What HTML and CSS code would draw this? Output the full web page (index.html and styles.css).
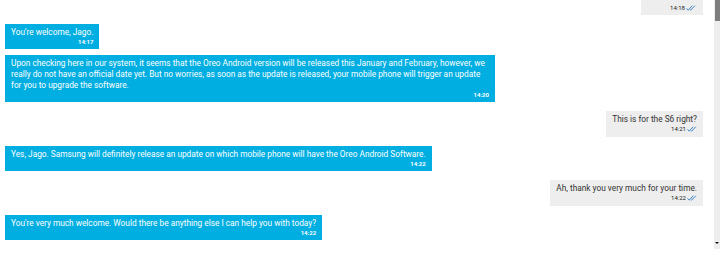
FILE: index.html
```html
<!DOCTYPE html>
<html lang="en">
<head>
<meta charset="utf-8">
<title>Chat</title>
<link rel="stylesheet" href="styles.css">
</head>
<body>
<div class="screen">
  <div class="chat">
    <div class="bubble user top">
      <div class="time">14:18 <svg class="tick" viewBox="0 0 10 6" width="10" height="6"><path d="M0.6 3.4 L2.2 5.2 L6.2 0.7 M3.9 4.6 L4.6 5.2 L8.9 0.7"/></svg></div>
    </div>
    <div class="bubble agent">
      <div class="text">You're welcome, Jago.</div>
      <div class="time">14:17</div>
    </div>
    <div class="bubble agent cont wide">
      <div class="text">Upon checking here in our system, it seems that the Oreo Android version will be released this January and February, however, we<br>really do not have an official date yet. But no worries, as soon as the update is released, your mobile phone will trigger an update<br>for you to upgrade the software.</div>
      <div class="time">14:20</div>
    </div>
    <div class="bubble user">
      <div class="text">This is for the S6 right?</div>
      <div class="time">14:21 <svg class="tick" viewBox="0 0 10 6" width="10" height="6"><path d="M0.6 3.4 L2.2 5.2 L6.2 0.7 M3.9 4.6 L4.6 5.2 L8.9 0.7"/></svg></div>
    </div>
    <div class="bubble agent">
      <div class="text">Yes, Jago. Samsung will definitely release an update on which mobile phone will have the Oreo Android Software.</div>
      <div class="time">14:22</div>
    </div>
    <div class="bubble user">
      <div class="text">Ah, thank you very much for your time.</div>
      <div class="time">14:22 <svg class="tick" viewBox="0 0 10 6" width="10" height="6"><path d="M0.6 3.4 L2.2 5.2 L6.2 0.7 M3.9 4.6 L4.6 5.2 L8.9 0.7"/></svg></div>
    </div>
    <div class="bubble agent">
      <div class="text">You're very much welcome. Would there be anything else I can help you with today?</div>
      <div class="time">14:22</div>
    </div>
  </div>
  <div class="scrollbar">
    <div class="thumb"></div>
    <div class="arrow"></div>
  </div>
</div>
</body>
</html>
```

FILE: styles.css
```css
html, body {
  margin: 0;
  padding: 0;
  background: #ffffff;
}

body {
  width: 720px;
  height: 270px;
  overflow: hidden;
  font-family: Roboto, "Liberation Sans", Arial, sans-serif;
}

.screen {
  display: flex;
  width: 720px;
  height: 270px;
}

.chat {
  flex: 1;
  display: flex;
  flex-direction: column;
  gap: 9px;
  padding: 0 11px 0 5px;
}

.bubble {
  max-width: 490px;
  padding: 3px 6px 4px;
  font-size: 8.3px;
  line-height: 11px;
}

.text {
  white-space: normal;
}

.agent {
  align-self: flex-start;
  background: #00aee2;
  color: #ffffff;
}

.wide {
  width: 478px;
}

.user {
  align-self: flex-end;
  background: #eeeeee;
  color: #333333;
  padding-bottom: 5px;
}

.cont {
  margin-top: -3px;
}

.top {
  padding: 4px 7px 4px 29px;
}

.time {
  font-size: 6px;
  font-weight: 700;
  line-height: 7px;
  text-align: right;
}

.user .time {
  display: flex;
  justify-content: flex-end;
  align-items: center;
  gap: 1px;
  font-weight: 400;
  color: #1a1a1a;
}

.tick {
  display: block;
  fill: none;
  stroke: #3f86c4;
  stroke-width: 1;
}

.scrollbar {
  width: 6px;
  height: 249px;
  background: #eeeeee;
  display: flex;
  flex-direction: column;
  justify-content: space-between;
  align-items: flex-end;
}

.thumb {
  width: 5px;
  height: 21px;
  background: #7d7d7d;
}

.arrow {
  width: 0;
  height: 0;
  margin: 0 1px 5px 0;
  border-left: 2px solid transparent;
  border-right: 2px solid transparent;
  border-top: 2px solid #111111;
}
```
